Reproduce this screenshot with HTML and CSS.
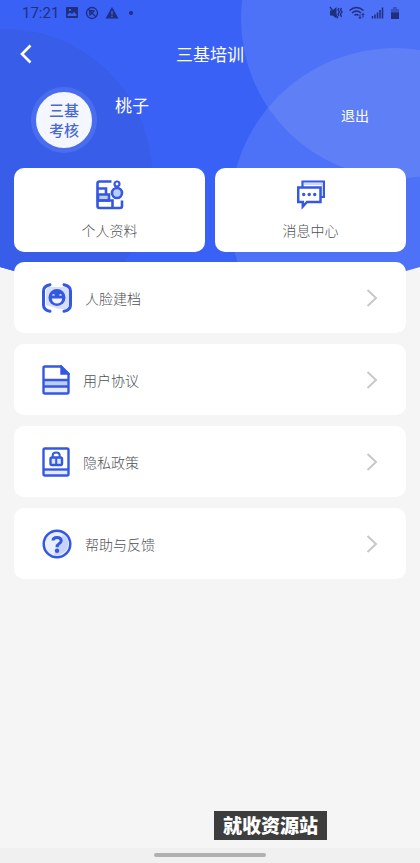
FILE: index.html
```html
<!DOCTYPE html>
<html lang="zh-CN">
<head>
<meta charset="utf-8">
<meta name="viewport" content="width=device-width, initial-scale=1">
<title>三基培训</title>
<link rel="stylesheet" href="styles.css">
</head>
<body>
<svg class="backdrop" viewBox="0 0 420 290" preserveAspectRatio="none" aria-hidden="true">
  <clipPath id="hero"><path d="M0 0H420V267Q210 330 0 267Z"/></clipPath>
  <g clip-path="url(#hero)">
    <rect width="420" height="290" fill="#3961f6"/>
    <circle cx="5" cy="176" r="147" fill="#385de9"/>
    <circle cx="400" cy="19" r="159" fill="#fff" fill-opacity=".1"/>
    <circle cx="395" cy="213" r="165" fill="#fff" fill-opacity=".1"/>
  </g>
</svg>
<div class="page">
  <div class="status">
    <span class="clock">17:21</span>
    <svg width="14" height="14" viewBox="0 0 14 14"><path fill="currentColor" fill-rule="evenodd" d="M2 1H12Q13 1 13 2V11Q13 12 12 12H2Q1 12 1 11V2Q1 1 2 1ZM2.500 10H11.500V8.500L9 6L7 8L5 6.500L2.500 8.500ZM4 3V5H6V3Z"/></svg>
    <svg width="14" height="14" viewBox="0 0 14 14" fill="none" stroke="currentColor" stroke-width="1.300"><circle cx="7" cy="7" r="5.500"/><path d="M3 3L11 11M4.500 9.500L9.500 4.500M5 4.500L9.500 5M4.500 5.500L5 9.500"/></svg>
    <svg width="14" height="14" viewBox="0 0 14 14"><path fill="currentColor" fill-rule="evenodd" d="M7 1L13.500 12.500H.5ZM6.300 5V8.800H7.700V5ZM6.300 9.800V11.200H7.700V9.800Z"/></svg>
    <span class="dot"></span>
    <span class="spacer"></span>
    <svg width="14" height="14" viewBox="0 0 14 14"><path fill="currentColor" d="M1 4.500H3.500L7.500 1V12.500L3.500 9.500H1Z"/><path fill="none" stroke="currentColor" stroke-width="1.300" d="M1 1L9 12M10 2L9 4L10.500 6L9 8L10 10M12.500 2L11.500 4L13 6L11.500 8L12.500 11"/></svg>
    <svg width="16" height="14" viewBox="0 0 16 14" fill="none" stroke="currentColor" stroke-width="1.400"><path d="M.5 4.500Q7.500-1.500 14.500 4.500M3 7Q7.500 3 12 7M5.500 9.500Q7.500 7.500 9.500 9.500"/><path d="M11 8.500V12.500M14 7.500V11.500M9.700 11L11 12.500L12.300 11M12.700 9L14 7.500L15.300 9" stroke-width="1"/></svg>
    <svg width="13" height="14" viewBox="0 0 13 14" fill="none" stroke="currentColor" stroke-width="1.500"><path d="M1.500 12.500V10M4 12.500V8.500M6.500 12.500V6.500M9 12.500V4M11.500 12.500V1.500"/></svg>
    <svg width="10" height="14" viewBox="0 0 10 14"><path fill="currentColor" fill-opacity=".45" d="M3 1H7V3H9V7H1V3H3Z"/><path fill="currentColor" d="M1 6.500H9V13H1Z"/></svg>
  </div>

  <header class="navbar">
    <button class="back" type="button" aria-label="返回"><svg width="12" height="20" viewBox="0 0 12 20" fill="none" stroke="#fff" stroke-width="2.600"><path d="M10.500 1.500L2 10L10.500 18.500"/></svg></button>
    <h1>三基培训</h1>
  </header>

  <section class="profile">
    <div class="avatar">三基<br>考核</div>
    <span class="name">桃子</span>
    <button class="logout" type="button">退出</button>
  </section>

  <nav class="tiles">
    <a class="tile" href="#profile">
      <svg width="28" height="30" viewBox="0 0 28 30" fill="none" stroke="#3558e2" stroke-width="2.600"><path d="M2 14.500H13V20.500H2Z" fill="#bccdfb"/><path d="M15.500 1.500H3.500Q1.500 1.500 1.500 3.500V26Q1.500 28 3.500 28H24Q26 28 26 26V20.500M2 8.500H10V14.500M2 20.500H16.500V27.500"/><circle cx="21" cy="4" r="2.500" stroke-width="2.200"/><circle cx="21" cy="13" r="5" fill="#bccdfb"/></svg>
      <span>个人资料</span>
    </a>
    <a class="tile" href="#messages">
      <svg width="28" height="30" viewBox="0 0 28 30" fill="none" stroke="#3558e2" stroke-width="2.200"><path d="M5.500 7V1.500H27V17H23.500"/><path d="M7 4H25V16" stroke="#bccdfb" stroke-width="1.500"/><path d="M1.200 7.500H23.500V22H10L5.800 26.500V22H1.200Z" fill="#fff" stroke-width="2.500"/><g fill="#3558e2" stroke="none"><circle cx="6.700" cy="14.500" r="1.700"/><circle cx="12.200" cy="14.500" r="1.700"/><circle cx="17.700" cy="14.500" r="1.700"/></g></svg>
      <span>消息中心</span>
    </a>
  </nav>

  <nav class="menu">
    <a class="row" href="#face">
      <svg width="30" height="30" viewBox="0 0 30 30" fill="none"><path d="M6 4H24L27 7V23L24 26H17L4 22V7Z" fill="#d5dffd"/><path d="M8 1.700Q1.500 3 1.500 8V22Q1.500 27 8 28.300M22 1.700Q28.500 3 28.500 8V22Q28.500 27 22 28.300" stroke="#3558e2" stroke-width="3" stroke-linecap="round"/><circle cx="15" cy="14.500" r="8.500" fill="#3558e2"/><path d="M9.800 15.500H20.200Q19.500 20.500 15 20.500Q10.500 20.500 9.800 15.500Z" fill="#f2f5ff"/><path d="M10.500 12.500Q11.500 11 12.500 12.500M17.500 12.500Q18.500 11 19.500 12.500" stroke="#d5dffd" stroke-width="1.300"/></svg>
      <span class="label">人脸建档</span>
      <svg class="chevron" viewBox="0 0 12 18"><path d="M1.500 1L10 9L1.500 17"/></svg>
    </a>
    <a class="row" href="#terms">
      <svg width="28" height="30" viewBox="0 0 28 30" fill="none" stroke="#3558e2" stroke-width="2.400"><path d="M2 15H26V21H2Z" fill="#bccdfb" stroke="none"/><path d="M2 21H26V28H2Z" fill="#e4eafe" stroke="none"/><path d="M19 1.500H3Q1.500 1.500 1.500 3V27Q1.500 28.500 3 28.500H25Q26.500 28.500 26.500 27V9ZM2 15H26M2 21.500H26"/><path d="M19.500 2V8.500H26Z" fill="#3558e2"/></svg>
      <span class="label">用户协议</span>
      <svg class="chevron" viewBox="0 0 12 18"><path d="M1.500 1L10 9L1.500 17"/></svg>
    </a>
    <a class="row" href="#privacy">
      <svg width="28" height="30" viewBox="0 0 28 30" fill="none" stroke="#3558e2" stroke-width="2.400"><path d="M2 22.500H26V28H2Z" fill="#e4eafe" stroke="none"/><rect x="1.500" y="1.500" width="25" height="27" rx="1.500"/><path d="M2 22.500H26"/><rect x="8.500" y="10.500" width="11.500" height="7.500" rx="1.500" fill="#dce5fe"/><path d="M10.700 10V8.500Q10.700 5.500 14.200 5.500Q17.700 5.500 17.700 8.500V10M14.200 11V17.500" stroke-width="2"/></svg>
      <span class="label">隐私政策</span>
      <svg class="chevron" viewBox="0 0 12 18"><path d="M1.500 1L10 9L1.500 17"/></svg>
    </a>
    <a class="row" href="#help">
      <svg width="30" height="30" viewBox="0 0 30 30" fill="none"><circle cx="15" cy="15" r="13.300" fill="#e8eeff"/><path d="M21 5Q29 12 25 20Q20 27 12 26L17 15Z" fill="#c6d4fc"/><circle cx="15" cy="15" r="13.300" stroke="#3558e2" stroke-width="2.500"/><path d="M11 11.500Q11 8.500 15 8.500Q19.200 8.500 19.200 11.700Q19.200 13.500 17 14.700Q15 16 15 18.300" stroke="#3558e2" stroke-width="3"/><circle cx="15" cy="21.700" r="2.200" fill="#3558e2"/></svg>
      <span class="label">帮助与反馈</span>
      <svg class="chevron" viewBox="0 0 12 18"><path d="M1.500 1L10 9L1.500 17"/></svg>
    </a>
  </nav>

  <footer class="footer">
    <span class="mark">就收资源站</span>
    <div class="gesture"><span></span></div>
  </footer>
</div>
</body>
</html>
```

FILE: styles.css
```css
* {
  box-sizing: border-box;
}

body {
  margin: 0;
  background: #f5f5f5;
  color: #505256;
  font-family: "Noto Sans CJK SC", sans-serif;
  font-size: 14px;
  font-weight: 300;
  line-height: 20px;
}

/* Curved header background, behind the page content */
.backdrop {
  position: absolute;
  top: 0;
  left: 0;
  z-index: -1;
  width: 100%;
  height: 290px;
}

.page {
  display: flex;
  flex-direction: column;
  min-height: 100vh;
}

svg {
  display: block;
  flex: none;
}

a {
  color: inherit;
  text-decoration: none;
}

button {
  padding: 0;
  border: 0;
  background: none;
  color: #fff;
  font: inherit;
}

.status {
  display: flex;
  align-items: center;
  gap: 6px;
  height: 26px;
  padding: 0 20px 0 22px;
  color: #1f2f7c;
}

.clock {
  font-family: Roboto, sans-serif;
  font-size: 15px;
  font-weight: 400;
}

.dot {
  width: 4px;
  height: 4px;
  margin-left: 4px;
  border-radius: 50%;
  background: currentColor;
}

.spacer {
  flex: 1;
}

.navbar {
  display: grid;
  grid-template-columns: 40px 1fr 40px;
  align-items: center;
  height: 56px;
}

.back {
  padding-left: 20px;
}

h1 {
  margin: 0;
  color: #fff;
  font-size: 17px;
  font-weight: 400;
  text-align: center;
}

.profile {
  display: flex;
  align-items: flex-start;
  height: 86px;
  padding: 5px 51px 0 31px;
  color: #fff;
  font-weight: 400;
}

.avatar {
  width: 66px;
  height: 66px;
  padding-top: 8px;
  border: 5px solid #4a6df0;
  border-radius: 50%;
  background: #f4f7ff;
  color: #4a69d2;
  font-size: 15px;
  font-weight: 500;
  text-align: center;
}

.name {
  flex: 1;
  margin: 8px 0 0 18px;
  font-size: 17px;
}

.logout {
  margin-top: 18px;
}

.tiles {
  display: grid;
  grid-template-columns: 1fr 1fr;
  gap: 10px;
  padding: 0 14px;
}

.tile {
  display: flex;
  flex-direction: column;
  align-items: center;
  gap: 10px;
  padding: 12px 0;
  border-radius: 10px;
  background: #fff;
}

.menu {
  display: flex;
  flex-direction: column;
  gap: 11px;
  padding: 10px 14px;
}

.row {
  display: flex;
  align-items: center;
  gap: 13px;
  height: 71px;
  padding: 0 28px;
  border-radius: 10px;
  background: #fff;
}

.label {
  flex: 1;
}

.chevron {
  width: 12px;
  height: 18px;
  fill: none;
  stroke: #c8c8c8;
  stroke-width: 2;
}

.footer {
  display: flex;
  flex-direction: column;
  gap: 8px;
  margin-top: auto;
}

.mark {
  align-self: flex-end;
  margin-right: 93px;
  padding: 0 9px 1px;
  background: #3d3d3d;
  color: #fff;
  font-size: 19px;
  font-weight: 900;
  line-height: 28px;
}

.gesture {
  display: flex;
  justify-content: center;
  height: 15px;
  padding-top: 5px;
  background: #f0f0f0;
}

.gesture span {
  width: 112px;
  height: 4px;
  border-radius: 2px;
  background: #b0b0b0;
}
```
